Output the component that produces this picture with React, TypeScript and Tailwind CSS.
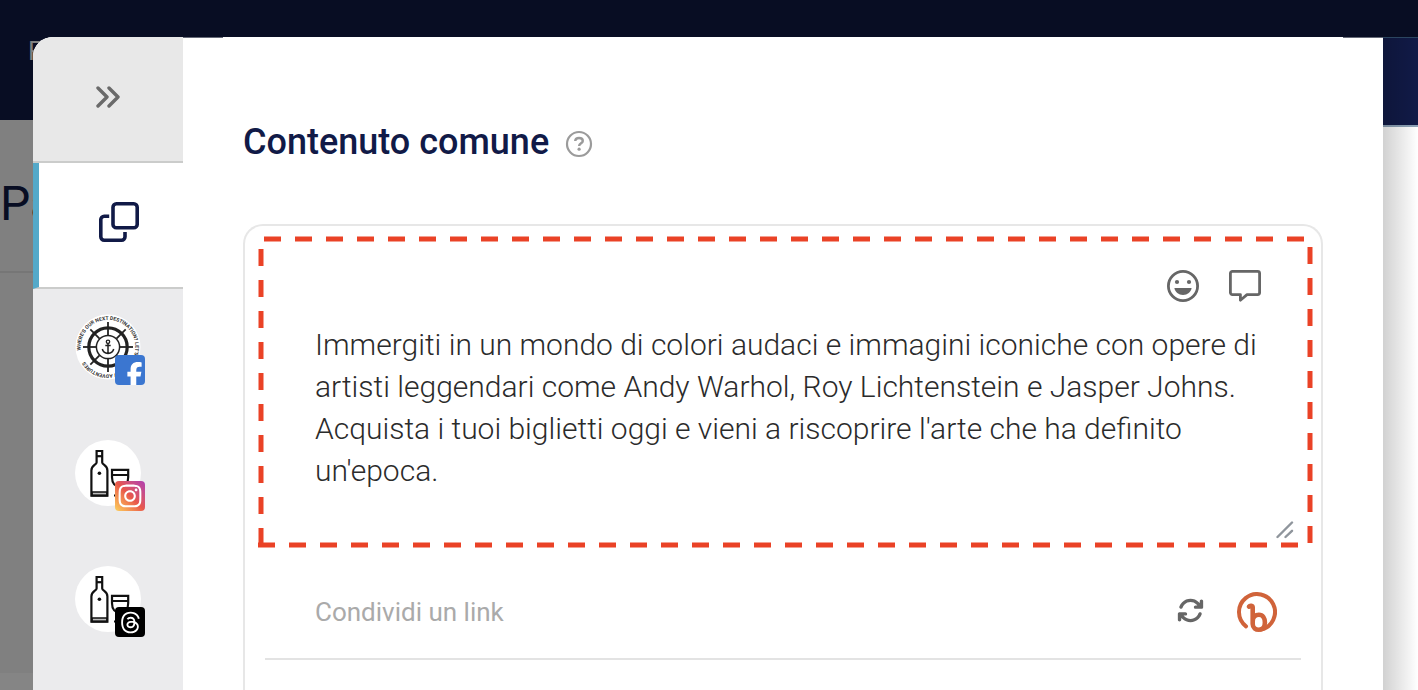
import { useState } from 'react';
import type { ReactNode } from 'react';
import { FaArrowsRotate, FaFacebookF, FaInstagram, FaThreads } from 'react-icons/fa6';

const DEFAULT_TEXT =
  "Immergiti in un mondo di colori audaci e immagini iconiche con opere di artisti leggendari come Andy Warhol, Roy Lichtenstein e Jasper Johns. Acquista i tuoi biglietti oggi e vieni a riscoprire l'arte che ha definito un'epoca.";

function ChevronsIcon() {
  return (
    <svg width="24" height="22" viewBox="0 0 24 22" fill="none" stroke="#6a6a6a" strokeWidth="3.4" strokeLinecap="round" strokeLinejoin="round">
      <path d="M2 2l9 9-9 9M13 2l9 9-9 9" />
    </svg>
  );
}

function CopyIcon() {
  return (
    <svg width="40" height="40" viewBox="0 0 40 40" fill="none" stroke="#111a47" strokeWidth="3.6">
      <rect x="14" y="1.8" width="24.2" height="24" rx="3.4" />
      <path d="M10.2 14.2H5.2A3.4 3.4 0 0 0 1.8 17.6v17.2a3.4 3.4 0 0 0 3.4 3.4h17.4a3.4 3.4 0 0 0 3.4-3.4V30" />
    </svg>
  );
}

function HelpIcon() {
  return (
    <svg width="28" height="28" viewBox="0 0 28 28" fill="none" stroke="#9b9b9b" strokeWidth="2.2">
      <circle cx="14" cy="14" r="12" />
      <path d="M10.2 11c.2-2.2 1.8-3 3.8-3s3.8 1 3.8 2.9c0 2.3-3.7 2.5-3.7 5.2" strokeWidth="2.4" />
      <circle cx="14.1" cy="19.2" r="1.6" fill="#9b9b9b" stroke="none" />
    </svg>
  );
}

function SmileIcon() {
  return (
    <svg width="32" height="32" viewBox="0 0 32 32" fill="none">
      <circle cx="16" cy="16" r="14.6" stroke="#666" strokeWidth="2.8" />
      <circle cx="10" cy="12" r="2.1" fill="#666" />
      <circle cx="22" cy="12" r="2.1" fill="#666" />
      <path d="M7.4 18h17.2c-.6 4-4.2 7-8.6 7s-8-3-8.6-7z" fill="#666" />
    </svg>
  );
}

function CommentIcon() {
  return (
    <svg width="32" height="32" viewBox="0 0 32 32" fill="none" stroke="#666" strokeWidth="2.8" strokeLinejoin="round">
      <path d="M3.4 1.4h25.2a2 2 0 0 1 2 2v19.2a2 2 0 0 1-2 2H18L11.4 30.2V24.6H3.4a2 2 0 0 1-2-2V3.4a2 2 0 0 1 2-2z" />
    </svg>
  );
}

function BitlyIcon() {
  return (
    <svg width="40" height="40" viewBox="0 0 40 40" fill="none" stroke="#d0633a" strokeLinecap="round" strokeLinejoin="round">
      <path d="M9 34.3A18 18 0 1 1 24 37.600" strokeWidth="4" />
      <path d="M12 14.600c1-1.400 3.700-1.200 3.700.8V32c0 4 3 5.700 6.200 5.700 4 0 6-3 6-7.200s-2-7.800-6-7.800c-3.600 0-6.200 2.600-6.200 6.500" strokeWidth="4.6" />
    </svg>
  );
}

function WheelAvatar() {
  return (
    <svg width="66" height="66" viewBox="0 0 66 66" fill="none" stroke="#222">
      <circle cx="33" cy="33" r="32.5" fill="#fff" stroke="none" />
      <path id="ring" d="M5.9 36.5A27.3 27.3 0 1 1 6.4 39.3" stroke="none" />
      <text fill="#333" stroke="none" fontFamily="Roboto" fontWeight="700" fontSize="5.1">
        <textPath href="#ring">WHERE'S OUR NEXT DESTINATION? LET'S GO ON NEW ADVENTURES</textPath>
      </text>
      <circle cx="33" cy="33" r="19.2" strokeWidth="3.2" />
      <circle cx="33" cy="33" r="11.6" strokeWidth="1.5" />
      {[0, 45, 90, 135, 180, 225, 270, 315].map((angle) => (
        <path key={angle} d="M33 21V8" strokeWidth="1.8" transform={`rotate(${angle} 33 33)`} />
      ))}
      <circle cx="33" cy="27.8" r="1.7" strokeWidth="1.3" />
      <path d="M33 29.5V39M30.3 31.4h5.4M27.3 35c.6 2.8 2.6 4.2 5.7 4.4 3.1-.2 5.1-1.6 5.7-4.4" strokeWidth="1.5" />
    </svg>
  );
}

function BottleAvatar() {
  return (
    <svg width="66" height="66" viewBox="0 0 66 66" fill="none" stroke="#111" strokeWidth="2.2">
      <circle cx="33" cy="33" r="33" fill="#fff" stroke="none" />
      <path d="M17 52h15v3.6H17z" fill="#bbb" strokeWidth="1.6" />
      <path d="M21.6 11h5.6v11.5c0 2.2 5.2 2.6 5.2 8V55.6h-16V30.5c0-5.4 5.2-5.8 5.2-8z" />
      <path d="M21.6 16.2h5.6" />
      <circle cx="24.4" cy="33.3" r="1.8" fill="#111" stroke="none" />
      <path d="M37 29.8h16.2v7.5c0 6-3.2 9.5-8.1 9.5S37 43.3 37 37.3zM37 35h16.2M45 47v8M39 55.5h12" />
    </svg>
  );
}

function ResizeIcon() {
  return (
    <svg width="18" height="18" viewBox="0 0 18 18" fill="none" stroke="#8f959c" strokeWidth="2.4" strokeLinecap="round">
      <path d="M1.5 16L16 1.5M9.5 16L16 9.8" />
    </svg>
  );
}

// Dashed marker around the message area
function Highlight() {
  return (
    <svg className="pointer-events-none absolute inset-0 h-full w-full overflow-visible" stroke="#ea4226" strokeWidth="5" strokeDasharray="17 14">
      <line x1="3" y1="0" x2="100%" y2="0" />
      <line x1="100%" y1="8" x2="100%" y2="100%" />
      <line x1="-3" y1="100%" x2="99%" y2="100%" />
      <line x1="0" y1="10" x2="0" y2="100%" />
    </svg>
  );
}

interface Account {
  name: string;
  avatar: ReactNode;
  badge: ReactNode;
  badgeClass: string;
}

const accounts: Account[] = [
  {
    name: 'Facebook',
    avatar: <WheelAvatar />,
    badge: <FaFacebookF size={25} className="translate-x-1 translate-y-1" />,
    badgeClass: 'bg-[#3b76d0]',
  },
  {
    name: 'Instagram',
    avatar: <BottleAvatar />,
    badge: <FaInstagram size={26} />,
    badgeClass: 'bg-linear-to-tr from-[#fbd05c] via-[#e8574a] to-[#b03bb0]',
  },
  {
    name: 'Threads',
    avatar: <BottleAvatar />,
    badge: <FaThreads size={23} />,
    badgeClass: 'bg-black',
  },
];

export default function App() {
  const [text, setText] = useState(DEFAULT_TEXT);
  const [link, setLink] = useState('');

  return (
    <div className="relative flex h-screen overflow-hidden bg-white font-['Roboto',sans-serif]">
      {/* Page behind the dialog */}
      <div className="absolute inset-0 flex flex-col">
        <div className="h-[37px] shrink-0 bg-[#080d23]" />
        <div className="flex flex-1">
          <div className="flex w-1/2 flex-col bg-[#808080]">
            <div className="h-[83px] bg-[#080d23] pl-7 text-[26px] leading-7 text-[#808080]">F</div>
            <div className="h-[153px] border-b-2 border-[#767676] pt-14 text-5xl leading-14 text-[#080d23]">Pa</div>
            <div className="flex-1" />
            <div className="h-[17px] bg-[#858585]" />
          </div>
          <div className="flex-1">
            <div className="h-[90px] border-t border-b-2 border-t-[#2b4560] border-b-[#8ea3b8] bg-[#111a47]" />
          </div>
        </div>
      </div>
      <div className="absolute top-[38px] right-0 bottom-0 w-[35px] bg-linear-to-r from-black/18 to-transparent" />

      <div className="relative mt-[37px] mr-[35px] ml-[33px] flex flex-1 overflow-hidden rounded-tl-[20px] bg-white">
        {/* Sidebar */}
        <nav className="flex w-[150px] shrink-0 flex-col bg-[#ebebed]">
          <button aria-label="Espandi" className="flex h-[126px] shrink-0 items-center justify-center border-b-2 border-[#cbcccb] bg-[#e8e8e8] pb-1">
            <ChevronsIcon />
          </button>
          <button aria-label="Contenuto comune" className="flex h-[126px] shrink-0 items-center justify-center border-b-2 border-b-[#cbcccb] border-l-6 border-l-[#54a9c9] bg-white pb-1.5 pl-4">
            <CopyIcon />
          </button>
          <div className="flex flex-col items-center gap-15 pt-[25px]">
            {accounts.map((account) => (
              <button key={account.name} aria-label={account.name} className="relative size-[66px]">
                {account.avatar}
                <span className={`absolute -right-1 -bottom-[5px] flex size-[30px] items-center justify-center overflow-hidden rounded text-white ${account.badgeClass}`}>
                  {account.badge}
                </span>
              </button>
            ))}
          </div>
        </nav>

        {/* Content */}
        <main className="flex min-w-0 flex-1 flex-col">
          <div className="flex h-px shrink-0 justify-between">
            <span className="w-10 bg-[#666a78]" />
            <span className="w-10 bg-[#666a78]" />
          </div>
          <div className="flex flex-1 flex-col px-15 pt-20">
            <div className="flex items-center gap-4">
              <h1 className="text-4xl leading-12 font-medium text-[#111a47]">Contenuto comune</h1>
              <button aria-label="Aiuto" className="mt-1">
                <HelpIcon />
              </button>
            </div>

            <div className="mt-[58px] flex-1 rounded-t-[20px] border-2 border-b-0 border-[#e7e7e7]">
              <div className="relative mt-[13px] mr-[11px] ml-4 h-[306px]">
                <div className="flex justify-end gap-[30px] pt-[31px] pr-[49px]">
                  <button aria-label="Emoji">
                    <SmileIcon />
                  </button>
                  <button aria-label="Commento">
                    <CommentIcon />
                  </button>
                </div>
                <textarea
                  aria-label="Messaggio"
                  rows={4}
                  value={text}
                  onChange={(e) => setText(e.target.value)}
                  className="mt-[22px] block w-full resize-none overflow-hidden pr-[49px] pl-[54px] text-[30px] leading-[42px] font-light text-[#2b2b2b] outline-none"
                />
                <div className="absolute right-4 bottom-1.5">
                  <ResizeIcon />
                </div>
                <Highlight />
              </div>

              <div className="mx-5 mt-[47px] flex items-center border-b-2 border-[#e3e3e3] pr-6 pb-[26px] pl-[50px]">
                <input
                  type="text"
                  aria-label="Link"
                  placeholder="Condividi un link"
                  value={link}
                  onChange={(e) => setLink(e.target.value)}
                  className="h-10 min-w-0 flex-1 text-[26px] text-[#2b2b2b] outline-none placeholder:text-[#aaa]"
                />
                <button aria-label="Aggiorna" className="pb-1 text-[#666]">
                  <FaArrowsRotate size={27} />
                </button>
                <button aria-label="Bitly" className="ml-[33px]">
                  <BitlyIcon />
                </button>
              </div>
            </div>
          </div>
        </main>
      </div>
    </div>
  );
}
